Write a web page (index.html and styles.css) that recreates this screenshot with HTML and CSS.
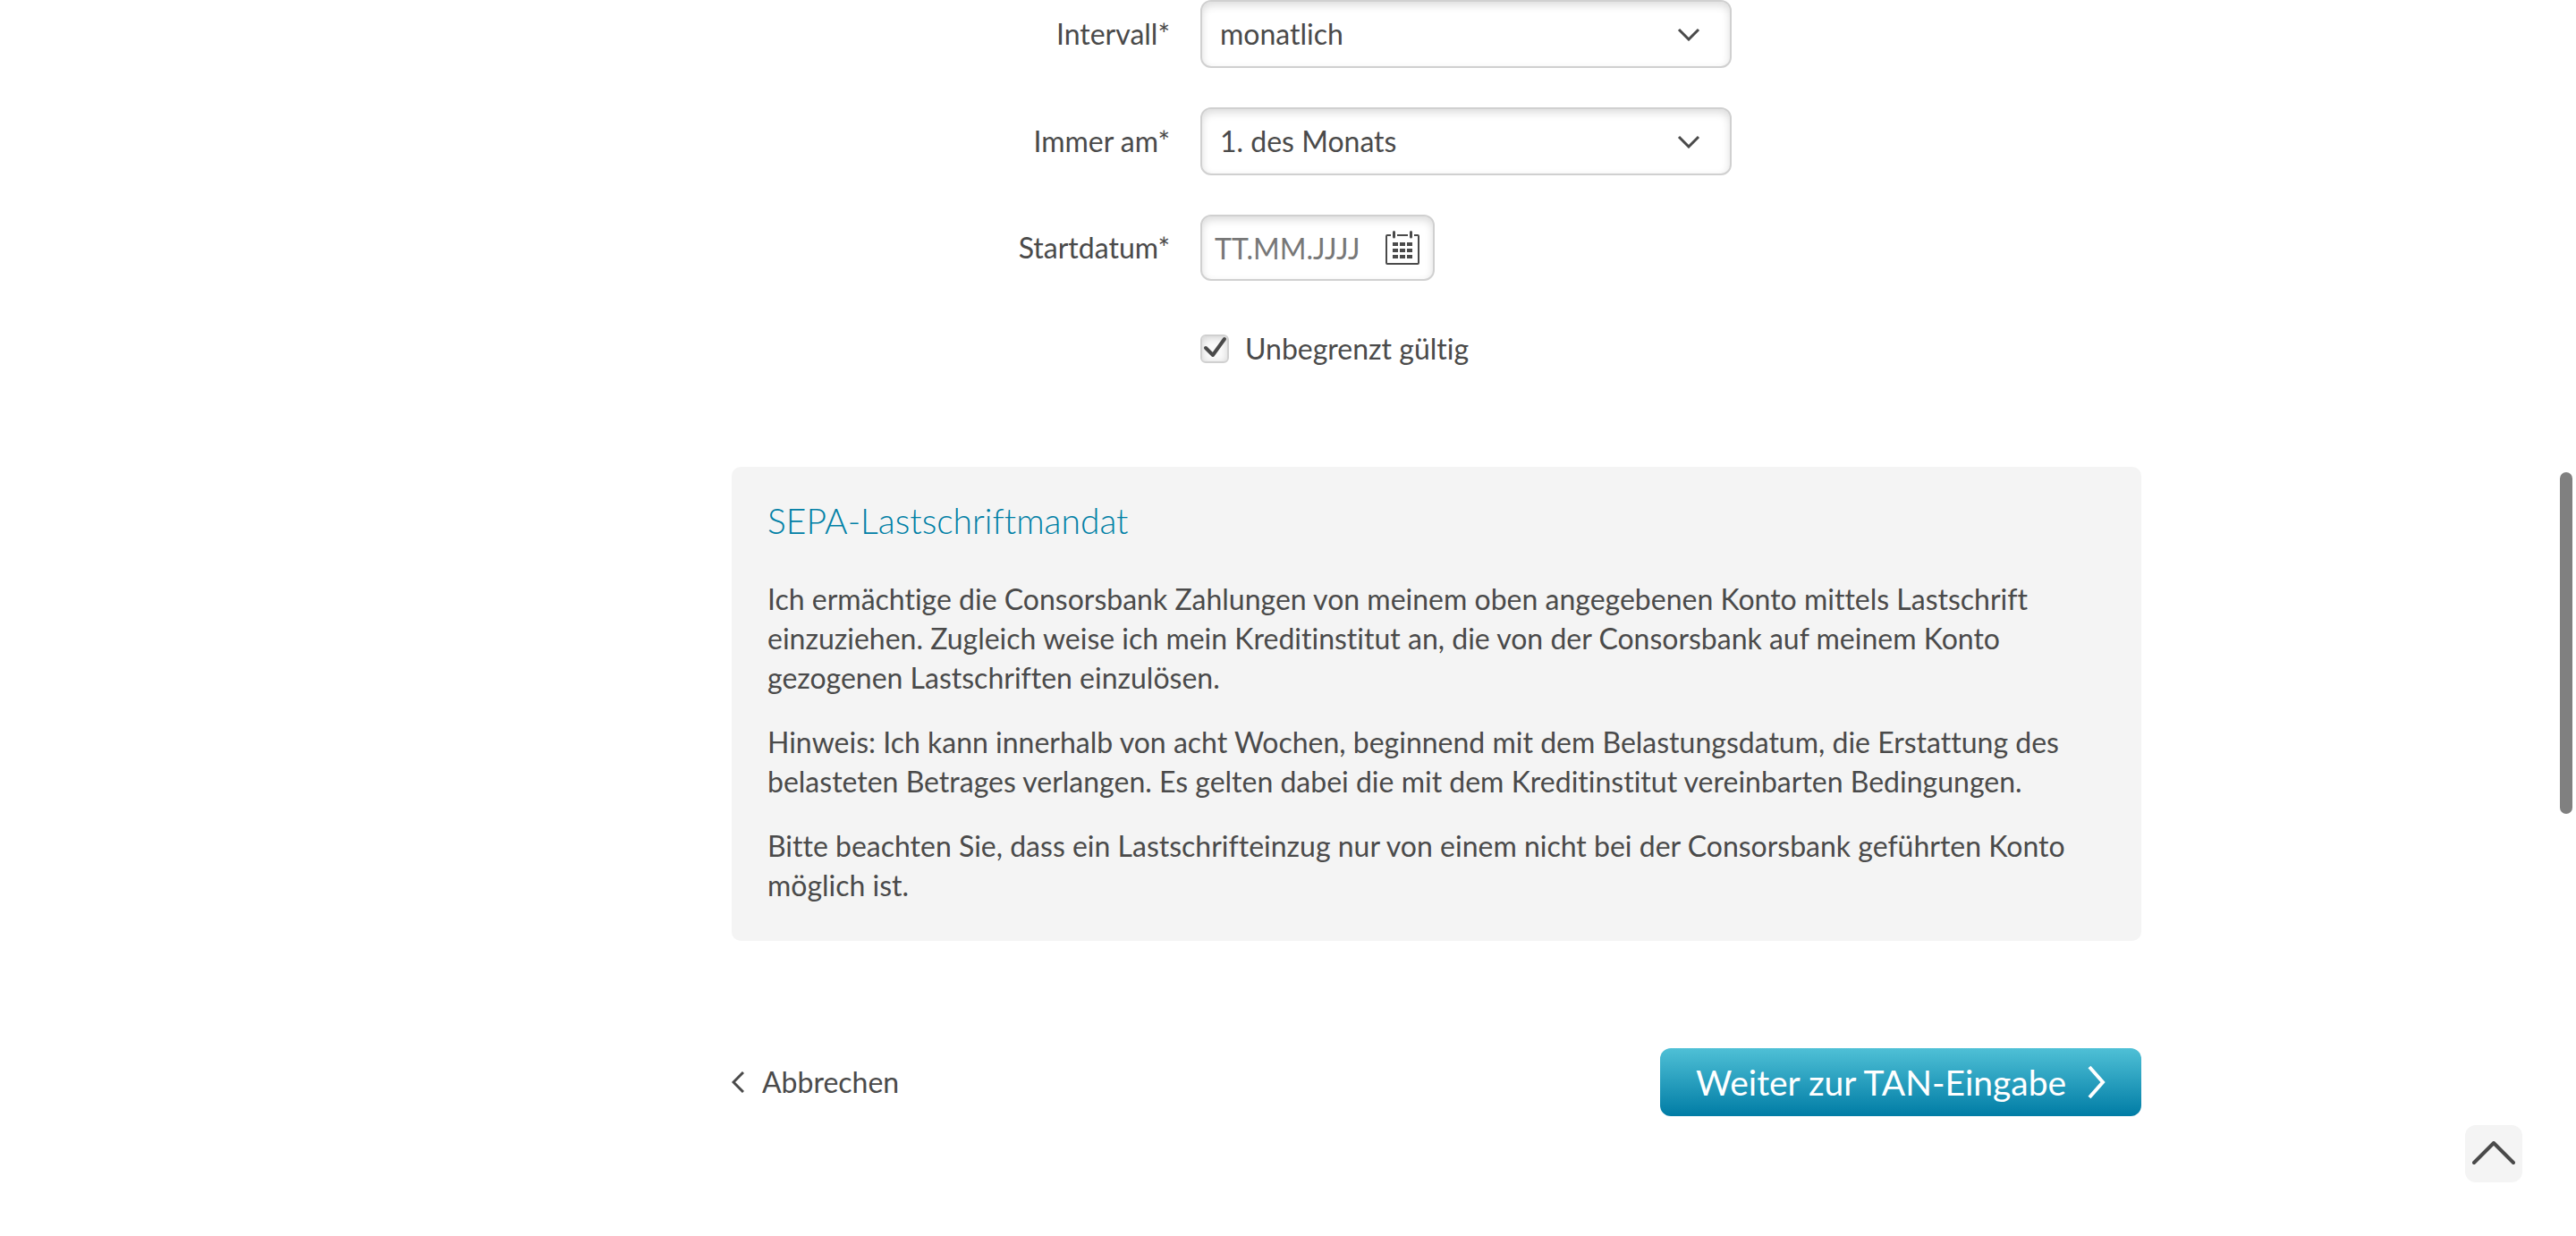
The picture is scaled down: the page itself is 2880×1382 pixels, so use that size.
FILE: index.html
```html
<!DOCTYPE html>
<html lang="de">
<head>
<meta charset="utf-8">
<meta name="viewport" content="width=device-width, initial-scale=1">
<title>SEPA-Lastschriftmandat</title>
<link rel="stylesheet" href="styles.css">
</head>
<body>
<main class="page">
  <form class="form">
    <div class="fields">
      <div class="row">
        <label class="label" for="intervall">Intervall*</label>
        <div class="select">
          <select class="select-field" id="intervall"><option>monatlich</option></select>
          <svg class="select-arrow" viewBox="0 0 26 16" aria-hidden="true"><path d="M2 3l11 11L24 3"/></svg>
        </div>
      </div>
      <div class="row">
        <label class="label" for="tag">Immer am*</label>
        <div class="select">
          <select class="select-field" id="tag"><option>1. des Monats</option></select>
          <svg class="select-arrow" viewBox="0 0 26 16" aria-hidden="true"><path d="M2 3l11 11L24 3"/></svg>
        </div>
      </div>
      <div class="row">
        <label class="label" for="startdatum">Startdatum*</label>
        <div class="date">
          <input class="date-input" id="startdatum" type="text" placeholder="TT.MM.JJJJ">
          <button class="date-button" type="button" aria-label="Kalender öffnen">
            <svg class="calendar" viewBox="0 0 38 38" aria-hidden="true">
              <path class="calendar-frame" d="M6 5H2a1 1 0 0 0-1 1v30a1 1 0 0 0 1 1h34a1 1 0 0 0 1-1V6a1 1 0 0 0-1-1h-4M13 5h12"/>
              <path class="calendar-ring" d="M9.500 1.500v5.500M28.500 1.500v5.500"/>
              <path class="calendar-days" d="M8 13h6v4H8zM16 13h6v4h-6zM24 13h6v4h-6zM8 20h6v4H8zM16 20h6v4h-6zM24 20h6v4h-6zM8 27h6v4H8zM16 27h6v4h-6zM24 27h6v4h-6z"/>
            </svg>
          </button>
        </div>
      </div>
    </div>
    <div class="check">
      <span class="check-box">
        <input class="check-input" id="unbegrenzt" type="checkbox" checked>
        <svg class="check-mark" viewBox="0 0 32 32" aria-hidden="true"><path d="M6 15l8 8L27 5"/></svg>
      </span>
      <label for="unbegrenzt">Unbegrenzt gültig</label>
    </div>

    <section class="mandate">
      <h2 class="mandate-title">SEPA-Lastschriftmandat</h2>
      <p class="mandate-text">Ich ermächtige die Consorsbank Zahlungen von meinem oben angegebenen Konto mittels Lastschrift einzuziehen. Zugleich weise ich mein Kreditinstitut an, die von der Consorsbank auf meinem Konto gezogenen Lastschriften einzulösen.</p>
      <p class="mandate-text">Hinweis: Ich kann innerhalb von acht Wochen, beginnend mit dem Belastungsdatum, die Erstattung des belasteten Betrages verlangen. Es gelten dabei die mit dem Kreditinstitut vereinbarten Bedingungen.</p>
      <p class="mandate-text">Bitte beachten Sie, dass ein Lastschrifteinzug nur von einem nicht bei der Consorsbank geführten Konto möglich ist.</p>
    </section>

    <div class="actions">
      <a class="cancel" href="#">
        <svg class="cancel-icon" viewBox="0 0 14 24" aria-hidden="true"><path d="M13 1L2 12l11 11"/></svg>
        Abbrechen
      </a>
      <button class="submit" type="submit">
        Weiter zur TAN-Eingabe
        <svg class="submit-icon" viewBox="0 0 20 38" aria-hidden="true"><path d="M2 2l15 17L2 36"/></svg>
      </button>
    </div>
  </form>
</main>
<a class="to-top" href="#" aria-label="Nach oben">
  <svg class="to-top-icon" viewBox="0 0 48 28" aria-hidden="true"><path d="M2 24L24 2l22 22"/></svg>
</a>
<div class="scroll-thumb"></div>
</body>
</html>
```
FILE: styles.css
```css
* { box-sizing: border-box; }

body {
  margin: 0;
  background: #fff;
  color: #4a4a4a;
  font-family: Lato, "Liberation Sans", sans-serif;
  font-size: 32px;
  font-variant-ligatures: none;
  line-height: 44px;
}

svg {
  display: block;
  flex: none;
  fill: none;
  stroke: currentColor;
}

.page {
  max-width: 1908px;
  margin: 0 auto;
  padding-left: 332px;
}

.fields {
  display: grid;
  gap: 44px;
}

.row {
  display: grid;
  grid-template-columns: 490px minmax(0, 594px);
  column-gap: 34px;
  align-items: center;
}

.label { text-align: right; }

.select,
.date {
  border: 2px solid #d0d0d0;
  border-radius: 12px;
  background: #fff;
  box-shadow: inset 0 4px 10px rgba(0, 0, 0, 0.14);
}

.select {
  display: grid;
  align-items: center;
}

.select-field {
  grid-area: 1 / 1;
  width: 100%;
  height: 72px;
  padding: 0 80px 0 20px;
  border: 0;
  background: none;
  color: inherit;
  font: inherit;
  appearance: none;
}

.select-arrow {
  grid-area: 1 / 1;
  justify-self: end;
  width: 26px;
  height: 16px;
  margin-right: 33px;
  stroke-width: 3;
  pointer-events: none;
}

.date {
  display: flex;
  width: 262px;
  overflow: hidden;
}

.date-input {
  flex: 1;
  min-width: 0;
  height: 70px;
  padding: 0 0 0 14px;
  border: 0;
  background: none;
  color: inherit;
  font: inherit;
}

.date-input::placeholder { color: #777; }

.date-button {
  display: flex;
  align-items: center;
  justify-content: center;
  width: 68px;
  padding: 0;
  border: 0;
  background: none;
  color: inherit;
}

.calendar { width: 38px; height: 38px; }
.calendar-frame { stroke-width: 2; }
.calendar-ring { stroke-width: 3; stroke-linecap: round; }
.calendar-days { fill: currentColor; stroke: none; }

.check {
  display: flex;
  align-items: center;
  gap: 18px;
  margin-top: 54px;
  padding-left: 524px;
}

.check-box { display: grid; }

.check-input {
  grid-area: 1 / 1;
  width: 32px;
  height: 32px;
  margin: 0;
  border: 2px solid #d0d0d0;
  border-radius: 6px;
  background: #fafafa;
  box-shadow: inset 0 2px 8px rgba(0, 0, 0, 0.16);
  appearance: none;
}

.check-mark {
  grid-area: 1 / 1;
  width: 32px;
  height: 32px;
  stroke-width: 4;
  stroke-linecap: round;
  stroke-linejoin: round;
  pointer-events: none;
}

.mandate {
  margin-top: 110px;
  padding: 36px 40px 40px;
  border-radius: 10px;
  background: #f4f4f4;
}

.mandate-title {
  margin: 0 0 42px;
  color: #0080a6;
  font-size: 39px;
  font-weight: 300;
  line-height: 48px;
}

.mandate-text { margin: 0; }
.mandate-text + .mandate-text { margin-top: 28px; }

.actions {
  display: flex;
  align-items: center;
  justify-content: space-between;
  margin-top: 120px;
}

.cancel {
  display: flex;
  align-items: center;
  gap: 20px;
  color: inherit;
  text-decoration: none;
}

.cancel-icon { width: 14px; height: 24px; stroke-width: 3; }

.submit {
  display: flex;
  align-items: center;
  justify-content: space-between;
  width: 538px;
  height: 76px;
  padding: 0 40px;
  border: 0;
  border-radius: 12px;
  background: linear-gradient(#4fc0d6, #007ca5);
  color: #fff;
  font: inherit;
  font-size: 39px;
}

.submit-icon { width: 20px; height: 38px; stroke-width: 4; }

.to-top {
  position: fixed;
  right: 60px;
  bottom: 60px;
  display: grid;
  place-items: center;
  width: 64px;
  height: 64px;
  border-radius: 12px;
  background: #f4f4f4;
  color: #4a4a4a;
}

.to-top-icon {
  width: 48px;
  height: 28px;
  stroke-width: 4;
  stroke-linecap: round;
  stroke-linejoin: round;
}

.scroll-thumb {
  position: fixed;
  top: 528px;
  right: 4px;
  width: 14px;
  height: 382px;
  border-radius: 7px;
  background: #808080;
}
```
